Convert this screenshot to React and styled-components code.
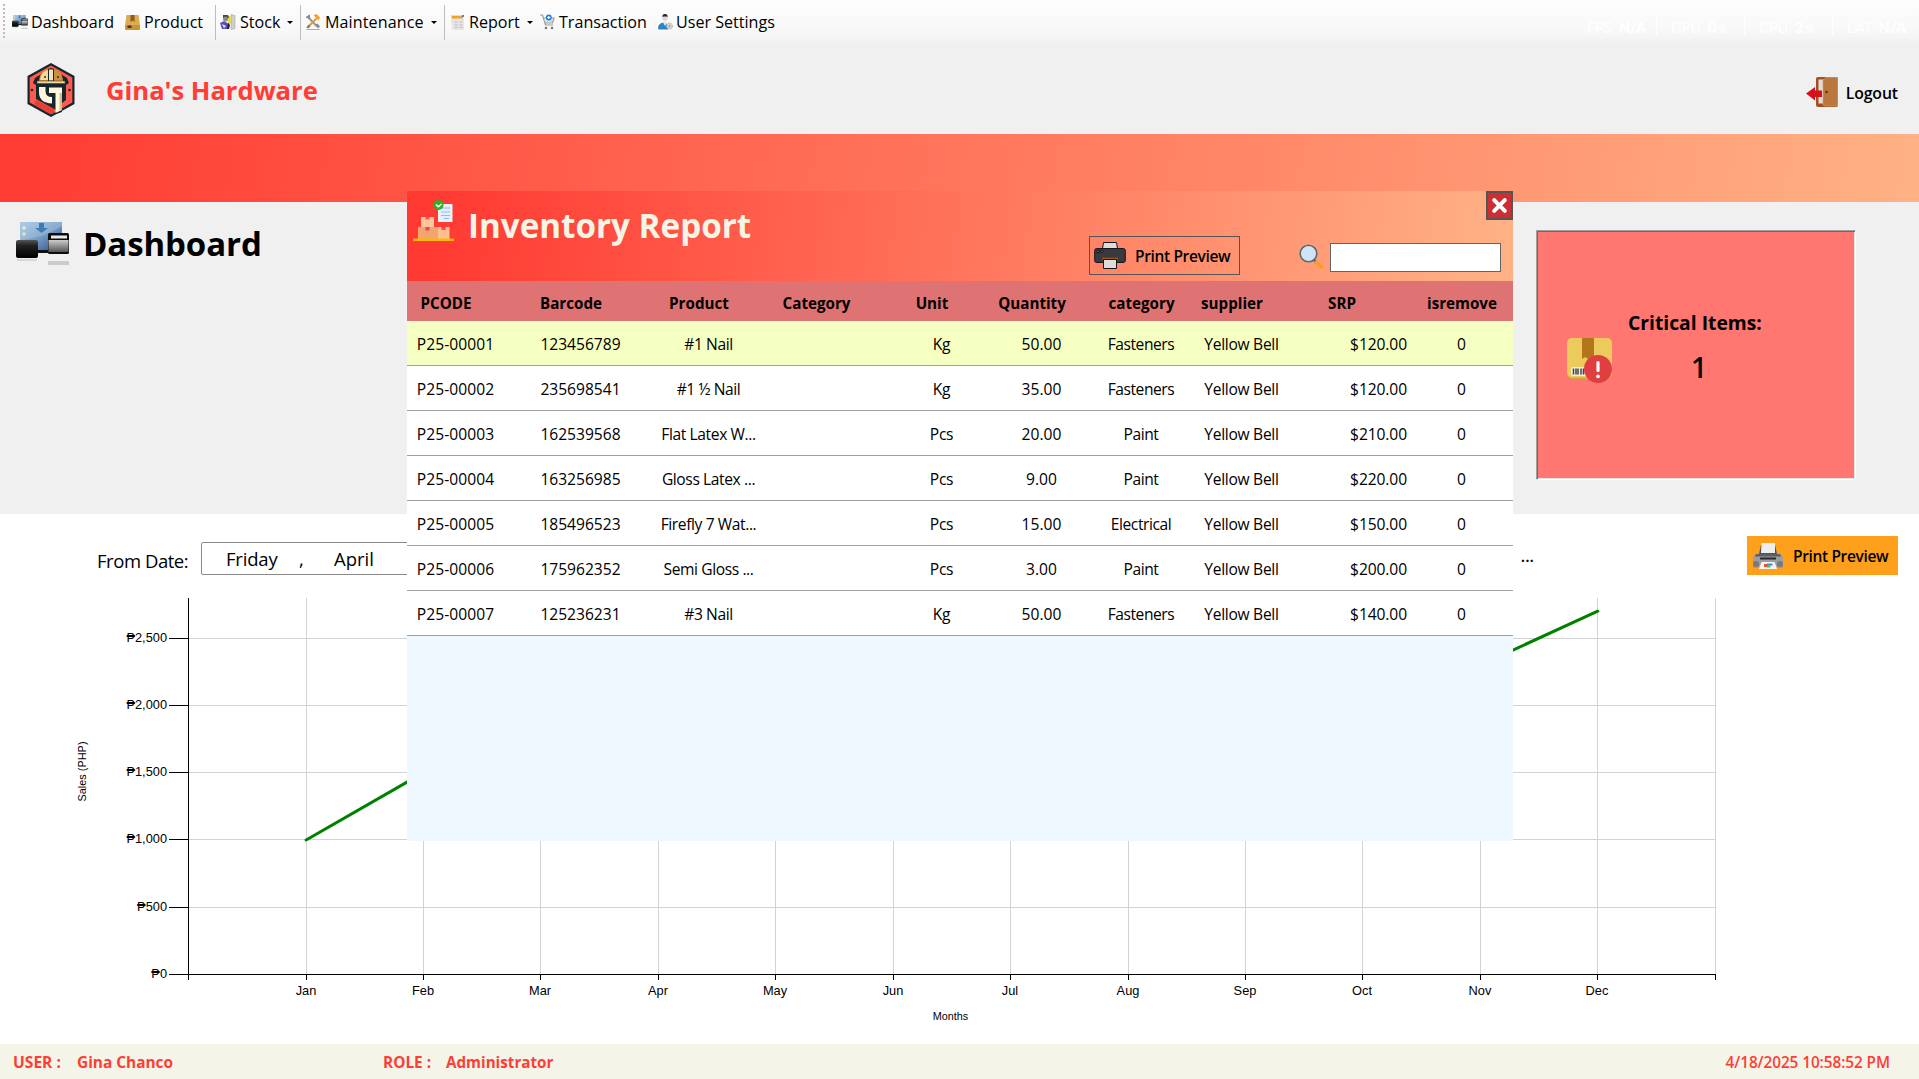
import React from "react";
import styled, { createGlobalStyle, css } from "styled-components";

const sans = `"Open Sans", "Noto Sans", sans-serif`;

const GlobalStyle = createGlobalStyle`
  * { box-sizing: border-box; }
  body { margin: 0; overflow: hidden; background: #fff; font-family: ${sans}; color: #000; }
`;

const Screen = styled.div`
  position: relative;
  width: 1919px;
  height: 1079px;
  display: flex;
  flex-direction: column;
`;

const Label = styled.span`
  font-size: ${(p) => p.$size || 16}px;
  font-weight: ${(p) => p.$weight || 400};
  letter-spacing: ${(p) => p.$track || 0}px;
  color: ${(p) => p.$color || "#000"};
  line-height: 1;
  white-space: pre;
`;

/* ---------- tool strip ---------- */
const ToolStrip = styled.nav`
  height: 44px;
  flex: none;
  display: flex;
  align-items: flex-start;
  padding: 4px 0 0 3px;
  background: linear-gradient(#fdfdfd 0, #f8f8f8 70%, #f0f0f0 100%);
`;
const Grip = styled.div`
  width: 2px;
  height: 34px;
  margin-right: 7px;
  background: repeating-linear-gradient(#bdbdbd 0 2px, transparent 2px 4px);
`;
const ToolItem = styled.div`
  width: ${(p) => p.$width}px;
  height: 36px;
  display: flex;
  align-items: center;
  padding-left: ${(p) => p.$inset || 0}px;
  svg { flex: none; margin-right: ${(p) => p.$gap || 3}px; }
`;
const ToolText = styled(Label)`
  margin-top: 1px;
  font-size: 16.1px;
`;
const Caret = styled.i`
  margin-left: auto;
  margin-right: 7px;
  border: 3px solid transparent;
  border-top-color: #000;
  border-bottom: 0;
`;
const Divider = styled.div`
  width: 1px;
  height: 35px;
  margin-top: 1px;
  background: #bdbdbd;
`;

const Stats = styled.div`
  margin-left: auto;
  margin-right: 14px;
  padding-top: 11px;
  display: flex;
`;
const Stat = styled.div`
  width: ${(p) => p.$width || 88}px;
  height: 20px;
  display: flex;
  align-items: center;
  gap: 7px;
  font: 14.5px/20px Lato, sans-serif;
  color: #fff;
  padding-left: ${(p) => (p.$first ? 0 : 14)}px;
  padding-top: 6px;
  border-left: ${(p) => (p.$first ? "0" : "1px solid #fff")};
  b { font-weight: 900; }
  small { font-size: 11px; font-weight: 900; margin-left: 2px; }
`;

/* ---------- header ---------- */
const Header = styled.header`
  height: 90px;
  flex: none;
  display: flex;
  align-items: flex-start;
  padding: 18px 21px 0 26px;
  background: #f0f0f0;
`;
const Brand = styled(Label)`
  margin: 16px 0 0 30px;
`;
const Logout = styled.button`
  margin: 14px 0 0 auto;
  padding: 0;
  border: 0;
  background: none;
  display: flex;
  align-items: center;
  gap: 7px;
  font-family: inherit;
  > span { margin-top: 3px; }
`;
const Banner = styled.div`
  height: 68px;
  flex: none;
  background: linear-gradient(100deg, #ff3d34 2%, #ffb085 99%);
`;

/* ---------- summary area ---------- */
const Summary = styled.section`
  height: 312px;
  flex: none;
  display: flex;
  justify-content: space-between;
  align-items: flex-start;
  padding: 20px 63px 0 16px;
  background: #f0f0f0;
`;
const PageTitle = styled.h1`
  margin: 0;
  display: flex;
  align-items: flex-start;
  gap: 13px;
  span { margin-top: 5px; }
`;
const CriticalCard = styled.div`
  width: 320px;
  height: 250px;
  margin-top: 8px;
  padding: 75px 0 0 30px;
  display: flex;
  background: #ff7770;
  border: 1px solid;
  border-color: #a0a0a0 #fff #fff #a0a0a0;
  box-shadow: inset 1px 1px #696969, inset -1px -1px #e3e3e3;
  svg { flex: none; margin-top: 32px; }
`;
const CriticalText = styled.div`
  margin: 7px 0 0 16px;
  display: flex;
  flex-direction: column;
  gap: 21px;
  > :last-child { padding-left: 63px; }
`;

/* ---------- filter + chart ---------- */
const Report = styled.main`
  flex: 1;
  display: flex;
  flex-direction: column;
  background: #fff;
`;
const Filter = styled.div`
  height: 84px;
  display: flex;
  align-items: flex-start;
  padding: 22px 21px 0 97px;
`;
const FromLabel = styled(Label)`
  width: 92px;
  margin: 16px 0 0;
`;
const DateBox = styled.div`
  width: 340px;
  height: 33px;
  margin: 6px 0 0 12px;
  padding: 7px 0 0 24px;
  display: flex;
  border: 1px solid #8a8a8a;
  border-radius: 2px;
  > :nth-child(1) { width: 73px; }
  > :nth-child(2) { width: 35px; }
`;
const Ellipsis = styled(Label)`
  margin: 12px 0 0 auto;
`;
const OrangeButton = styled.button`
  width: 151px;
  height: 39px;
  margin: 0 0 0 213px;
  padding: 0 0 0 5px;
  border: 0;
  display: flex;
  align-items: center;
  gap: 9px;
  background: #ffa01c;
  font-family: inherit;
  > span { margin-top: 2px; }
`;
const ChartSvg = styled.svg`
  display: block;
  width: 1919px;
  height: 446px;
  text { font-family: "Liberation Sans", Arial, sans-serif; font-size: 12.8px; fill: #000; }
  .grid { stroke: #d3d3d3; }
  .axis { stroke: #000; }
  .title { font-size: 10.8px; }
`;

/* ---------- footer ---------- */
const Footer = styled.footer`
  height: 35px;
  flex: none;
  display: flex;
  align-items: center;
  padding: 2px 29px 0 13px;
  background: #f4f5e8;
  > :nth-child(1) { width: 64px; }
  > :nth-child(2) { width: 306px; }
  > :nth-child(3) { width: 63px; }
  > :last-child { margin-left: auto; }
`;

/* ---------- inventory dialog ---------- */
const Dialog = styled.section`
  position: absolute;
  left: 407px;
  top: 191px;
  width: 1106px;
  height: 650px;
  background: #eff7ff;
`;
const DialogHead = styled.div`
  height: 90px;
  display: flex;
  align-items: flex-start;
  padding-left: 6px;
  background: linear-gradient(98deg, #ff3a33 3%, #ffb085 98%);
  > svg:first-child { margin-top: 9px; }
`;
const DialogTitle = styled(Label)`
  margin: 18px 0 0 13px;
`;
const PrintButton = styled.button`
  width: 151px;
  height: 39px;
  margin: 45px 0 0 auto;
  padding: 0 0 0 4px;
  display: flex;
  align-items: center;
  gap: 9px;
  border: 1px solid #555;
  background: none;
  font-family: inherit;
  > span { margin-top: 2px; }
`;
const Search = styled.label`
  margin: 52px 0 0 59px;
  display: flex;
  gap: 6px;
`;
const SearchInput = styled.input`
  width: 171px;
  height: 29px;
  border: 1px solid #646464;
  background: #fff;
`;
const Close = styled.button`
  width: 27px;
  height: 29px;
  margin-left: -15px;
  padding: 0;
  border: 2px solid #555;
  background: #cc2f33;
  display: grid;
  place-items: center;
`;
const rowGrid = css`
  display: grid;
  grid-template-columns: 98px 152px 104px 131px 100px 100px 99px 102px 118px 102px;
  align-items: center;
`;
const HeadRow = styled.div`
  ${rowGrid}
  height: 40px;
  background: #df7373;
  padding-top: 3px;
`;
const HeadCell = styled.div`
  text-align: center;
  padding-right: ${(p) => (p.$shift ? 20 : 0)}px;
  font-size: 15.2px;
  font-weight: 700;
`;
const Row = styled.div`
  ${rowGrid}
  height: 45px;
  border-bottom: 1px solid #a0a0a0;
  background: ${(p) => (p.$selected ? "#f6ffc2" : "#fff")};
  padding-top: 2px;
`;
const Cell = styled.div`
  text-align: ${(p) => (p.$right ? "right" : "center")};
  padding-right: ${(p) => (p.$right ? 4 : 1)}px;
  font-size: 15.6px;
  letter-spacing: ${(p) => p.$track}px;
  white-space: nowrap;
`;

/* ---------- icons ---------- */
const DevicesIcon = ({ w, h }) => (
  <svg width={w} height={h} viewBox="0 0 54 46" preserveAspectRatio="none">
    <defs>
      <linearGradient id="scr" x1="0" y1="0" x2="1" y2="1"><stop offset="0" stopColor="#a9cbe6" /><stop offset=".55" stopColor="#6f96c0" /><stop offset="1" stopColor="#274b86" /></linearGradient>
      <linearGradient id="blk" x1="0" y1="0" x2="0" y2="1"><stop offset="0" stopColor="#555" /><stop offset=".3" stopColor="#222" /><stop offset="1" stopColor="#000" /></linearGradient>
      <linearGradient id="slv" x1="0" y1="0" x2="0" y2="1"><stop offset="0" stopColor="#ccc" /><stop offset="1" stopColor="#555" /></linearGradient>
    </defs>
    <path d="M4 0h42v28H4z" fill="url(#scr)" />
    <path d="M4 18Q28 16 46 4V0H4z" fill="#b7d3e8" opacity=".35" />
    <path d="M23 1h5v5h4l-6.500 5L19 6h4z" fill="#3d7db5" />
    <circle cx="8" cy="6" r="1.800" fill="#e4ecdc" /><circle cx="8" cy="12" r="1.800" fill="#e4e8b0" />
    <rect x="18" y="28" width="20" height="3" fill="#111" />
    <rect x="0" y="18" width="22" height="18" rx="2" fill="url(#blk)" />
    <rect x="32" y="11" width="21" height="21" rx="1.500" fill="#0c0c0c" />
    <rect x="35" y="13.500" width="16" height="3" fill="#e8e8e8" />
    <rect x="32.500" y="18" width="20" height="12" fill="url(#slv)" />
    <rect x="1" y="37" width="20" height="2" fill="#ccc" opacity=".7" />
    <rect x="32" y="39" width="21" height="4" fill="#bbb" opacity=".7" />
  </svg>
);
const BoxIcon = () => (
  <svg width="15" height="15" viewBox="0 0 15 15">
    <path d="M1.500 0h12L15 10.500H0z" fill="#dcab52" /><rect y="10" width="15" height="5" rx="1" fill="#c99437" />
    <path d="M5.500 0h4v7l-2-1.500-2 1.500z" fill="#8b5e1c" /><path d="M2.500 10.500h4V13h-4z" fill="#4a3420" />
  </svg>
);
const StockIcon = () => (
  <svg width="16" height="16" viewBox="0 0 16 16">
    <path d="M11 .5l4 1v13l-4 1z" fill="#cfcfcf" stroke="#999" strokeWidth=".5" /><path d="M8 2h3v8H8z" fill="#e0dc4c" />
    <path d="M3 1h5l1 3H3z" fill="#444" /><circle cx="5.500" cy="5" r="2.500" fill="#8a8a8a" />
    <path d="M0 9l4-2 5 3-1 5H2z" fill="#5552c0" /><path d="M2 10l4 2-2 2z" fill="#eee" /><path d="M8 9l2 2-1 4H7z" fill="#222" />
  </svg>
);
const ToolsIcon = () => (
  <svg width="16" height="16" viewBox="0 0 16 16" fill="none">
    <path d="M3 3l9 9.500" stroke="#999" strokeWidth="2" /><path d="M1 3.500L4.500 1v3z" fill="#888" stroke="#888" />
    <path d="M12 4L3.500 12.500" stroke="#e39a2b" strokeWidth="1.800" /><path d="M8.500 1.500l3-1.500L15 3.500l-1.500 3L11 3.500z" fill="#f0a022" />
    <path d="M1.500 15.500h13" stroke="#aaa" /><path d="M3.500 10.500l2 2-2.500 2-1.500-1z" fill="#777" /><path d="M10.500 10.500l2-1 2.500 3-2 2z" fill="#888" />
  </svg>
);
const ReportIcon = () => (
  <svg width="14" height="16" viewBox="0 0 14 16">
    <path d="M0 1h12v4h1v11H1z" fill="#ddd" /><path d="M1 4.500h12V16H1z" fill="#e6e6e6" /><path d="M1 2h11v2.500H1z" fill="#f3a02a" /><path d="M11 1h2v2h-2z" fill="#4183c4" />
    <path d="M3.500 8h3M8.500 8h3M3.500 11h3M8.500 11h3M3.500 13.500h3M8.500 13.500h3" stroke="#bcbcbc" strokeWidth="1.200" />
  </svg>
);
const CartIcon = () => (
  <svg width="15" height="16" viewBox="0 0 15 16" fill="none">
    <path d="M0 1h2.500l3 10H13M3 4h11l-1.500 5H5" stroke="#999" strokeWidth="1.200" /><path d="M4 7h9M7 4v5M11 4v5" stroke="#bbb" strokeWidth=".7" />
    <circle cx="8.800" cy="3.500" r="2.900" fill="#1580e0" /><path d="M8.800 1.900v3.200M7.200 3.500h3.200" stroke="#fff" strokeWidth="1.200" />
    <circle cx="6" cy="14" r="1.300" fill="#777" /><circle cx="12" cy="14" r="1.300" fill="#777" />
  </svg>
);
const UserIcon = () => (
  <svg width="15" height="16" viewBox="0 0 15 16">
    <circle cx="7" cy="4.200" r="2.700" fill="#d8d8d8" /><path d="M4.300 3Q4.300 0 7 0t2.700 3L8.500 2.500H5.500z" fill="#222" />
    <path d="M0 14.500Q0 9 6 8.500q3 0 4 3v4H1z" fill="#2a86c0" /><path d="M5 8.500h4L7 12z" fill="#eee" />
    <circle cx="11.500" cy="12" r="3" fill="#d5d5d5" stroke="#aaa" strokeDasharray="1.500 1" /><circle cx="11.500" cy="12" r="1" fill="#999" />
  </svg>
);
const Logo = () => (
  <svg width="50" height="56" viewBox="0 0 50 56">
    <path d="M25 1l23.500 13v28L25 55 1.500 42V14z" fill="#16262e" />
    <path d="M25 3.500l21.300 12v25L25 52.500 3.700 40.500v-25z" fill="#ff5a4e" />
    <path d="M25 6l16 10 2 5-3 2v15l-4 3v9l-6 2v-4L10 37V23l-3-2 2-5z" fill="#16262e" />
    <path d="M13 19Q14 7 25 7t12 12z" fill="#c98f3e" /><path d="M14 18q1-9 8-10v10z" fill="#f2d89a" />
    <path d="M22.500 7h5v12h-5z" fill="#f3e4b6" stroke="#16262e" /><path d="M11 19h28v2.500H11z" fill="#f0d79b" stroke="#5c3b1a" strokeWidth=".6" />
    <path d="M13 25h6.500v4q0 6 6.500 6v6.500Q13 41 13 30z" fill="#fff6dc" /><path d="M23 25.500h13V48l-6.500 3V31H23z" fill="#fff6dc" /><path d="M33.500 31H36v17l-2.500 1z" fill="#d8bf90" />
    <path d="M10 38l18 9v4l-3 1-17-9.500z" fill="#e83f35" /><circle cx="6" cy="28" r="1.300" fill="#16262e" /><circle cx="43.500" cy="28" r="1.300" fill="#16262e" />
    <circle cx="19" cy="15" r=".9" fill="#222" /><circle cx="32" cy="15" r=".9" fill="#222" />
  </svg>
);
const DoorIcon = () => (
  <svg width="33" height="32" viewBox="0 0 33 32">
    <rect x="10" y="1" width="22" height="30" rx="2" fill="#a3501c" /><path d="M12.500 3.500H18v24h-5.500z" fill="#ddd" />
    <path d="M17 4l3-2.500h11.500v28.500H20L17 29z" fill="#b9773d" stroke="#d39a60" strokeWidth=".7" /><circle cx="20.500" cy="16" r="1.200" fill="#5b2a10" />
    <path d="M0 17.500L9 11v3.500h7v6.500H9v3.500z" fill="#d5121b" />
  </svg>
);
const InventoryIcon = () => (
  <svg width="42" height="42" viewBox="0 0 42 42">
    <path d="M25 4h14.500v18H25z" fill="#e4f1fc" /><path d="M28 8h9M28 12h9M28 15.500h9M31 18.500h5" stroke="#8bbdf0" strokeWidth="1.100" />
    <path d="M8 17h13v10H8z" fill="#fdc79b" /><path d="M12.500 17h4v3l-2-1-2 1z" fill="#f0525e" />
    <path d="M5 27h20v12H5z" fill="#f2a570" /><path d="M25 27h11.500v12H25z" fill="#fdc08e" /><path d="M12.500 27h4v3.500h-4zM28.500 27h4v3.500l-2-1-2 1z" fill="#ee4650" />
    <path d="M0 38.500h41V41H0z" fill="#f9b900" /><circle cx="25.500" cy="5" r="5" fill="#36ac22" /><path d="M23 4.500l2.300 2.300L28.500 4" fill="none" stroke="#fff" strokeWidth="1.500" />
  </svg>
);
const DarkPrinter = () => (
  <svg width="32" height="27" viewBox="0 0 32 27" stroke="#15171b" strokeWidth="1">
    <path d="M8.500 6.500l1-6h13l1 6z" fill="#ddd" /><rect x=".7" y="6.500" width="30.600" height="14" rx="2" fill="#3a3a3e" />
    <path d="M8 16.500h16" stroke="#9a5a12" strokeWidth="1.500" /><path d="M9.500 17.500h13v9h-13z" fill="#dcdcdc" /><circle cx="4" cy="9.500" r="1.300" fill="#6c6a2a" /><circle cx="7.500" cy="9.500" r="1.300" fill="#555" />
  </svg>
);
const GrayPrinter = () => (
  <svg width="32" height="28" viewBox="0 0 32 28">
    <path d="M7 12L9 3h14l2 9z" fill="#4c5157" /><path d="M9.500 1h13.500v10h-14z" fill="#eee" />
    <path d="M3 12h26l2 4v10h-6l-2-5H9l-2 5H1V16z" fill="#9b9da1" /><path d="M4 12h24l1 2.500H3z" fill="#5c6066" /><path d="M8 15.500h16v2H8z" fill="#25282c" />
    <circle cx="4" cy="22" r="3" fill="#77797c" /><circle cx="28" cy="22" r="3" fill="#77797c" />
    <path d="M9.500 20h13l2.500 7H7z" fill="#f5f5f5" /><path d="M12 22h4v3h-4z" fill="#e8502f" /><path d="M15 21.500h5l1 2h-6z" fill="#2f8fe0" /><path d="M15 23.500h4l-1 2h-3z" fill="#57b83c" />
  </svg>
);
const SearchIcon = () => (
  <svg width="25" height="27" viewBox="0 0 25 27">
    <path d="M15 17l3 3" stroke="#5f6770" strokeWidth="2.500" /><path d="M17.500 19.500l5 4.500" stroke="#fb9c26" strokeWidth="4" strokeLinecap="round" />
    <circle cx="9.500" cy="10.500" r="8.300" fill="#cfe4f4" stroke="#5b6874" strokeWidth="1.600" />
  </svg>
);
const CrossIcon = () => (
  <svg width="17" height="17" viewBox="0 0 17 17"><path d="M3.200 3.200l10.600 10.600M13.800 3.200L3.200 13.800" stroke="#fff" strokeWidth="4" strokeLinecap="round" /></svg>
);
const CriticalIcon = () => (
  <svg width="45" height="46" viewBox="0 0 45 46">
    <rect x="0" y="0" width="45" height="41" rx="5" fill="#cfa93f" /><rect x="0" y="0" width="45" height="39.500" rx="5" fill="#ecca5c" />
    <path d="M15 0h12v22l-3-3-3 2-3-2-3 2z" fill="#b3761a" /><rect x="4" y="29" width="20" height="9" rx="2" fill="#f1ebe0" />
    <path d="M6.500 30.500v6M9 30.500v6M11 30.500v6M14 30.500v6M16.500 30.500v6" stroke="#444" strokeWidth="1.500" />
    <circle cx="31" cy="31" r="14" fill="#e03e40" /><path d="M31 24.500v8" stroke="#fff" strokeWidth="3.200" strokeLinecap="round" /><circle cx="31" cy="38.300" r="1.900" fill="#fff" />
  </svg>
);

/* ---------- chart ---------- */
const months = ["Jan", "Feb", "Mar", "Apr", "May", "Jun", "Jul", "Aug", "Sep", "Oct", "Nov", "Dec"];
const sales = [1000, 1500, 1250, 1700, 1600, 1900, 1800, 2100, 2000, 2250, 2300, 2700];
const AXIS_X = 188.5;
const BASE_Y = 376.5;
const STEP = 117.42;
const xOf = (i) => 188.7 + STEP * (i + 1);
const yOf = (v) => BASE_Y - v * 0.13455;
const crisp = (n) => Math.floor(n) + 0.5;

const SalesChart = () => (
  <ChartSvg viewBox="0 0 1919 446">
    {[500, 1000, 1500, 2000, 2500].map((v) => (
      <line key={v} className="grid" x1={AXIS_X} x2="1715.500" y1={crisp(yOf(v))} y2={crisp(yOf(v))} />
    ))}
    {[...months, "end"].map((m, i) => {
      const x = crisp(xOf(i));
      return (
        <g key={m}>
          <line className="grid" x1={x} x2={x} y1="0" y2="376" />
          <line className="axis" x1={x} x2={x} y1="376" y2="382" />
          {m !== "end" && <text x={x - 0.5} y="397" textAnchor="middle">{m}</text>}
        </g>
      );
    })}
    {[0, 500, 1000, 1500, 2000, 2500].map((v) => (
      <g key={v}>
        <line className="axis" x1="169" x2={AXIS_X} y1={crisp(yOf(v))} y2={crisp(yOf(v))} />
        <text x="167" y={crisp(yOf(v)) + 3.5} textAnchor="end">{"₱" + v.toLocaleString("en-US")}</text>
      </g>
    ))}
    <line className="axis" x1={AXIS_X} x2={AXIS_X} y1="0" y2="382" />
    <line className="axis" x1={AXIS_X} x2="1716" y1={BASE_Y} y2={BASE_Y} />
    <polyline fill="none" stroke="#008000" strokeWidth="3" strokeLinecap="round" strokeLinejoin="round"
      points={sales.map((v, i) => `${xOf(i)},${yOf(v)}`).join(" ")} />
    <text className="title" x="950.500" y="421.500" textAnchor="middle">Months</text>
    <text className="title" transform="translate(86 173.500) rotate(-90)" textAnchor="middle" textLength="60">Sales (PHP)</text>
  </ChartSvg>
);

/* ---------- data ---------- */
const headings = [["PCODE", 1], ["Barcode", 1], ["Product", 1], ["Category", 1], ["Unit", 1], ["Quantity", 1], ["category", 0], ["supplier", 1], ["SRP", 1], ["isremove", 0]];
const tracking = [0.05, 0, -0.4, 0, -0.3, 0, -0.45, -0.3, -0.1, 0];
const items = [
  ["P25-00001", "123456789", "#1 Nail", "", "Kg", "50.00", "Fasteners", "Yellow Bell", "$120.00", "0"],
  ["P25-00002", "235698541", "#1 ½ Nail", "", "Kg", "35.00", "Fasteners", "Yellow Bell", "$120.00", "0"],
  ["P25-00003", "162539568", "Flat Latex W...", "", "Pcs", "20.00", "Paint", "Yellow Bell", "$210.00", "0"],
  ["P25-00004", "163256985", "Gloss Latex ...", "", "Pcs", "9.00", "Paint", "Yellow Bell", "$220.00", "0"],
  ["P25-00005", "185496523", "Firefly 7 Wat...", "", "Pcs", "15.00", "Electrical", "Yellow Bell", "$150.00", "0"],
  ["P25-00006", "175962352", "Semi Gloss ...", "", "Pcs", "3.00", "Paint", "Yellow Bell", "$200.00", "0"],
  ["P25-00007", "125236231", "#3 Nail", "", "Kg", "50.00", "Fasteners", "Yellow Bell", "$140.00", "0"],
];
const RED = "#ff3d34";

export default function App() {
  return (
    <>
      <GlobalStyle />
      <Screen>
        <ToolStrip>
          <Grip />
          <ToolItem $width={113}><DevicesIcon w={16} h={15} /><ToolText>Dashboard</ToolText></ToolItem>
          <ToolItem $width={90} $gap={4}><BoxIcon /><ToolText>Product</ToolText></ToolItem>
          <Divider />
          <ToolItem $width={84} $inset={4} $gap={4}><StockIcon /><ToolText>Stock</ToolText><Caret /></ToolItem>
          <Divider />
          <ToolItem $width={143} $inset={4} $gap={4}><ToolsIcon /><ToolText $track={0.1}>Maintenance</ToolText><Caret /></ToolItem>
          <Divider />
          <ToolItem $width={95} $inset={6} $gap={4}><ReportIcon /><ToolText>Report</ToolText><Caret /></ToolItem>
          <ToolItem $width={118} $gap={4}><CartIcon /><ToolText>Transaction</ToolText></ToolItem>
          <ToolItem $width={130}><UserIcon /><ToolText>User Settings</ToolText></ToolItem>
          <Stats>
            <Stat $first $width={69}>FPS <b>N/A</b></Stat>
            <Stat>GPU <b>0<small>%</small></b></Stat>
            <Stat>CPU <b>2<small>%</small></b></Stat>
            <Stat $width={73}>LAT <b>N/A</b></Stat>
          </Stats>
        </ToolStrip>
        <Header>
          <Logo />
          <Brand $size={25.6} $weight={700} $color={RED}>Gina's Hardware</Brand>
          <Logout><DoorIcon /><Label $size={15.8} $weight={600} $track={-0.1}>Logout</Label></Logout>
        </Header>
        <Banner />
        <Summary>
          <PageTitle><DevicesIcon w={54} h={46} /><Label $size={33} $weight={700} $track={-0.1}>Dashboard</Label></PageTitle>
          <CriticalCard>
            <CriticalIcon />
            <CriticalText>
              <Label $size={19.3} $weight={700}>Critical Items:</Label>
              <Label $size={28} $weight={600}>1</Label>
            </CriticalText>
          </CriticalCard>
        </Summary>
        <Report>
          <Filter>
            <FromLabel $size={18.5} $track={-0.45}>From Date:</FromLabel>
            <DateBox><Label $size={18.5} $track={-0.2}>Friday</Label><Label $size={18.5}>,</Label><Label $size={18.5}>April</Label></DateBox>
            <Ellipsis $weight={600}>...</Ellipsis>
            <OrangeButton><GrayPrinter /><Label $size={15.5} $weight={600} $track={-0.35}>Print Preview</Label></OrangeButton>
          </Filter>
          <SalesChart />
        </Report>
        <Footer>
          <Label $size={15.6} $weight={700} $color={RED}>USER :</Label>
          <Label $size={15.4} $weight={700} $color={RED}>Gina Chanco</Label>
          <Label $size={15.4} $weight={700} $color={RED}>ROLE :</Label>
          <Label $size={15.2} $weight={700} $color={RED}>Administrator</Label>
          <Label $size={15.3} $weight={600} $track={-0.05} $color={RED}>4/18/2025 10:58:52 PM</Label>
        </Footer>

        <Dialog>
          <DialogHead>
            <InventoryIcon />
            <DialogTitle $size={33.2} $weight={700} $color="#f5f5e6">Inventory Report</DialogTitle>
            <PrintButton><DarkPrinter /><Label $size={15.5} $weight={600} $track={-0.35}>Print Preview</Label></PrintButton>
            <Search><SearchIcon /><SearchInput /></Search>
            <Close><CrossIcon /></Close>
          </DialogHead>
          <HeadRow>{headings.map(([h, s]) => <HeadCell key={h} $shift={s}>{h}</HeadCell>)}</HeadRow>
          {items.map((r, i) => (
            <Row key={r[0]} $selected={i === 0}>
              {r.map((c, j) => <Cell key={j} $right={j === 8} $track={tracking[j]}>{c}</Cell>)}
            </Row>
          ))}
        </Dialog>
      </Screen>
    </>
  );
}
